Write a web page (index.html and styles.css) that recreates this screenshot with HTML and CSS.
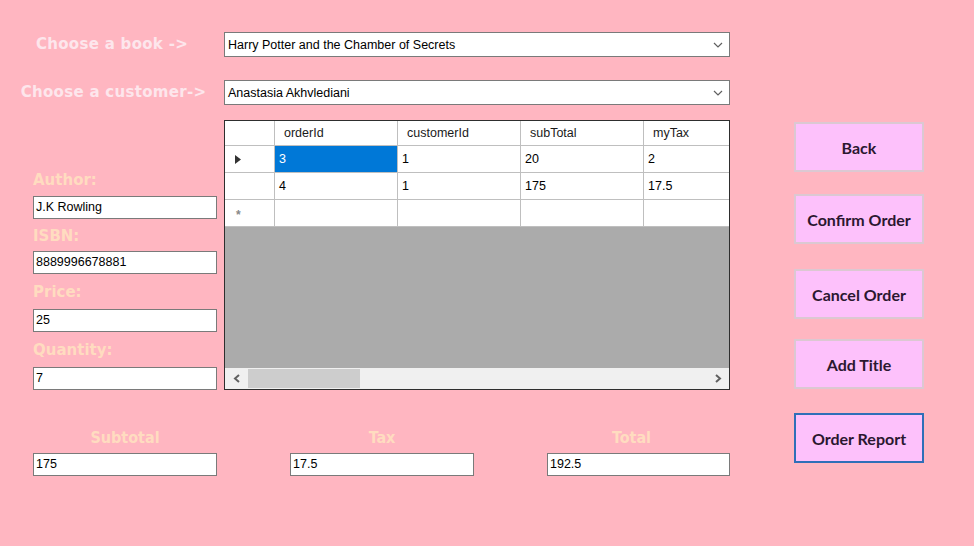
FILE: index.html
```html
<!DOCTYPE html>
<html>
<head>
<meta charset="utf-8">
<link rel="stylesheet" href="styles.css">
</head>
<body>
<div class="app">
  <div class="top">
    <div class="top-row">
      <div class="big-label">Choose a book -&gt;</div>
      <div class="combo"><span>Harry Potter and the Chamber of Secrets</span>
        <svg class="chev" width="10" height="6" viewBox="0 0 10 6"><polyline points="1,1 5,5 9,1" fill="none" stroke="#606060" stroke-width="1.2"/></svg></div>
    </div>
    <div class="top-row">
      <div class="big-label">Choose a customer-&gt;</div>
      <div class="combo"><span>Anastasia Akhvlediani</span>
        <svg class="chev" width="10" height="6" viewBox="0 0 10 6"><polyline points="1,1 5,5 9,1" fill="none" stroke="#606060" stroke-width="1.2"/></svg></div>
    </div>
  </div>

  <div class="fields">
    <div class="field"><div class="flabel">Author:</div><div class="tbox">J.K Rowling</div></div>
    <div class="field short"><div class="flabel">ISBN:</div><div class="tbox">8889996678881</div></div>
    <div class="field"><div class="flabel">Price:</div><div class="tbox">25</div></div>
    <div class="field"><div class="flabel">Quantity:</div><div class="tbox">7</div></div>
  </div>

  <div class="dgv">
    <div class="dgv-rows">
      <div class="row head">
        <div class="rh"></div>
        <div class="c hc">orderId</div>
        <div class="c hc">customerId</div>
        <div class="c hc">subTotal</div>
        <div class="c hc last">myTax</div>
      </div>
      <div class="row">
        <div class="rh"><svg width="6" height="9" viewBox="0 0 6 9"><polygon points="0,0 6,4.5 0,9" fill="#333"/></svg></div>
        <div class="c sel">3</div>
        <div class="c">1</div>
        <div class="c">20</div>
        <div class="c last">2</div>
      </div>
      <div class="row">
        <div class="rh"></div>
        <div class="c">4</div>
        <div class="c">1</div>
        <div class="c">175</div>
        <div class="c last">17.5</div>
      </div>
      <div class="row">
        <div class="rh star">*</div>
        <div class="c"></div>
        <div class="c"></div>
        <div class="c"></div>
        <div class="c last"></div>
      </div>
    </div>
    <div class="dgv-empty"></div>
    <div class="hscroll">
      <svg class="arr" width="8" height="9" viewBox="0 0 8 9"><polyline points="6,1 2,4.5 6,8" fill="none" stroke="#606060" stroke-width="2"/></svg>
      <div class="track"><div class="thumb"></div></div>
      <svg class="arr" width="8" height="9" viewBox="0 0 8 9"><polyline points="2,1 6,4.5 2,8" fill="none" stroke="#606060" stroke-width="2"/></svg>
    </div>
  </div>

  <div class="buttons">
    <div class="btn">Back</div>
    <div class="btn b2">Confirm Order</div>
    <div class="btn b3">Cancel Order</div>
    <div class="btn b4">Add Title</div>
    <div class="btn b5 focus">Order Report</div>
  </div>

  <div class="totals">
    <div class="tot"><div class="tlabel">Subtotal</div><div class="tbox">175</div></div>
    <div class="tot"><div class="tlabel">Tax</div><div class="tbox">17.5</div></div>
    <div class="tot w183"><div class="tlabel shift">Total</div><div class="tbox">192.5</div></div>
  </div>
</div>
</body>
</html>
```

FILE: styles.css
```css
html, body {
  margin: 0;
  padding: 0;
}
body {
  background: #ffb6c1;
  font-family: "Liberation Sans", Arial, sans-serif;
}
.app {
  width: 974px;
  height: 546px;
  display: grid;
  grid-template-columns: 224px 506px 64px 130px;
  grid-template-rows: 120px 270px 1fr;
}
.top {
  grid-column: 1 / 3;
  grid-row: 1;
  padding-top: 32px;
  display: flex;
  flex-direction: column;
  gap: 23px;
}
.top-row {
  display: flex;
  align-items: center;
  height: 25px;
}
.big-label {
  width: 224px;
  text-align: center;
  font-family: "DejaVu Sans", sans-serif;
  font-weight: bold;
  font-size: 15px;
  color: #fde6ec;
  letter-spacing: 0.3px;
  margin-top: -2px;
}
.top-row:last-child .big-label { padding-left: 3px; box-sizing: border-box; }
.combo {
  flex: 1;
  height: 25px;
  box-sizing: border-box;
  background: #fff;
  border: 1px solid #7a7a7a;
  display: flex;
  align-items: center;
  justify-content: space-between;
  padding: 0 6px 0 3px;
  font-size: 12.5px;
  color: #000;
}
.chev { margin-top: 1px; }

.fields {
  grid-column: 1;
  grid-row: 2 / 4;
  padding-top: 41px;
  padding-left: 33px;
  display: flex;
  flex-direction: column;
}
.field {
  display: flex;
  flex-direction: column;
}
.flabel {
  height: 35px;
  line-height: 36px;
  font-family: "DejaVu Sans", sans-serif;
  font-weight: bold;
  font-size: 15px;
  color: #ffdcc0;
}
.field:first-child .flabel { line-height: 38px; }
.field.short .flabel { height: 32px; line-height: 34px; }
.tbox {
  width: 184px;
  height: 23px;
  box-sizing: border-box;
  background: #fff;
  border: 1px solid #7a7a7a;
  font-size: 12.5px;
  line-height: 21px;
  padding-left: 2px;
  color: #000;
}

.dgv {
  grid-column: 2;
  grid-row: 2;
  border: 1px solid #2e2e2e;
  display: flex;
  flex-direction: column;
  background: #ababab;
  overflow: hidden;
}
.dgv-rows { display: flex; flex-direction: column; }
.row {
  display: grid;
  grid-template-columns: 50px 123px 123px 123px 1fr;
  height: 27px;
  background: #fff;
}
.row.head { height: 25px; }
.rh {
  box-sizing: border-box;
  border-right: 1px solid #bfbfbf;
  border-bottom: 1px solid #bfbfbf;
  display: flex;
  align-items: center;
  padding-left: 10px;
}
.rh.star {
  font-size: 12px;
  font-weight: bold;
  color: #888;
  padding-left: 11px;
  padding-top: 3px;
}
.c {
  box-sizing: border-box;
  border-right: 1px solid #bfbfbf;
  border-bottom: 1px solid #bfbfbf;
  font-size: 12.5px;
  line-height: 26px;
  padding-left: 4px;
  color: #000;
  white-space: nowrap;
}
.c.last { border-right: none; }
.hc {
  padding-left: 9px;
  line-height: 24px;
  color: #1a1a1a;
}
.c.sel {
  background: #0078d7;
  color: #fff;
}
.dgv-empty { flex: 1; }
.hscroll {
  height: 21px;
  background: #f0f0f0;
  display: flex;
  align-items: center;
}
.arr { margin: 0 7px 0 8px; }
.track {
  flex: 1;
  height: 19px;
  display: flex;
}
.thumb {
  width: 112px;
  height: 100%;
  background: #cdcdcd;
}

.buttons {
  grid-column: 4;
  grid-row: 2 / 4;
  padding-top: 2px;
  display: flex;
  flex-direction: column;
}
.btn {
  height: 50px;
  box-sizing: border-box;
  background: #fdc1fb;
  border: 2px solid #dcc8d2;
  display: flex;
  align-items: center;
  justify-content: center;
  font-family: Lato, "Open Sans", sans-serif;
  font-weight: bold;
  font-size: 16px;
  color: #2b1730;
}
.btn.b2 { margin-top: 22px; }
.btn.b3 { margin-top: 25px; }
.btn.b4 { margin-top: 20px; }
.btn.b5 { margin-top: 24px; }
.btn.focus {
  border: 2px solid #2f6fb8;
}

.totals {
  grid-column: 1 / 3;
  grid-row: 3;
  padding-top: 36px;
  padding-left: 33px;
  display: flex;
  gap: 73px;
}
.tot {
  display: flex;
  flex-direction: column;
  align-items: center;
}
.tlabel {
  height: 27px;
  line-height: 24px;
  font-family: "DejaVu Sans Condensed", "DejaVu Sans", sans-serif;
  font-weight: bold;
  font-size: 16px;
  color: #ffdcc0;
}
.tlabel.shift { margin-right: 14px; }
.w183 .tbox { width: 183px; }
```
